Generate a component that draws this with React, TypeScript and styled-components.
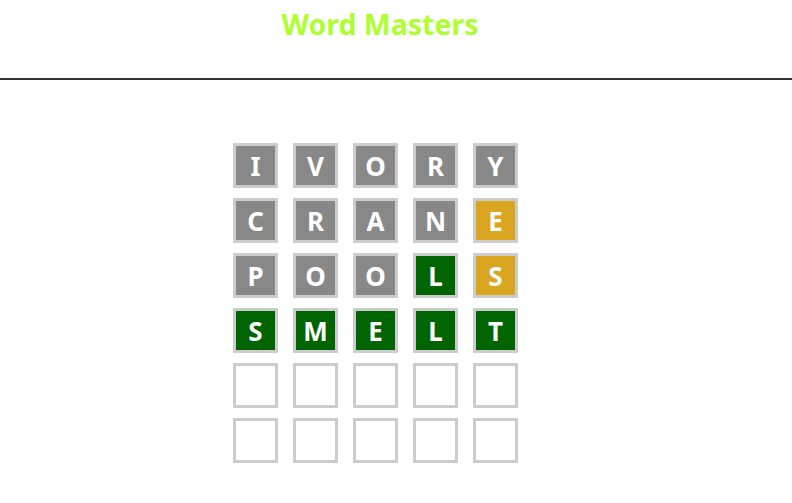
import styled, { createGlobalStyle } from 'styled-components';

type TileState = 'wrong' | 'close' | 'right' | 'empty';

type TileProps = {
	$state: TileState;
};

const GlobalStyle = createGlobalStyle`
	body {
		margin: 0;
		background: #fff;
		font-family: 'Noto Sans', 'Open Sans', sans-serif;
	}
`;

const Header = styled.header`
	height: 78px;
	border-bottom: 2px solid #333;
`;

const Title = styled.h1`
	width: 760px;
	margin: 0;
	padding-top: 6px;
	text-align: center;
	color: #adff2f;
	font-size: 28.5px;
	line-height: 36px;
	font-weight: 700;
`;

const Board = styled.main`
	display: grid;
	grid-template-columns: repeat(5, 45px);
	grid-auto-rows: 45px;
	column-gap: 15px;
	row-gap: 10px;
	margin: 63px 0 0 233px;
`;

const colours: Record<TileState, string> = {
	wrong: '#888888',
	close: '#daa520',
	right: '#006400',
	empty: '#ffffff'
};

const Tile = styled.div<TileProps>`
	box-sizing: border-box;
	display: flex;
	align-items: center;
	justify-content: center;
	border: 3px solid #ccc;
	background: ${(props) => colours[props.$state]};
	color: #fff;
	font-size: 26px;
	font-weight: 700;
`;

const guesses: { word: string; states: TileState[] }[] = [
	{ word: 'IVORY', states: ['wrong', 'wrong', 'wrong', 'wrong', 'wrong'] },
	{ word: 'CRANE', states: ['wrong', 'wrong', 'wrong', 'wrong', 'close'] },
	{ word: 'POOLS', states: ['wrong', 'wrong', 'wrong', 'right', 'close'] },
	{ word: 'SMELT', states: ['right', 'right', 'right', 'right', 'right'] },
	{ word: '     ', states: ['empty', 'empty', 'empty', 'empty', 'empty'] },
	{ word: '     ', states: ['empty', 'empty', 'empty', 'empty', 'empty'] }
];

const App = () => {
	return (
		<>
			<GlobalStyle />
			<Header>
				<Title>Word Masters</Title>
			</Header>
			<Board>
				{guesses.map((guess, row) =>
					guess.states.map((state, col) => (
						<Tile key={`${row}-${col}`} $state={state}>
							{guess.word[col].trim()}
						</Tile>
					))
				)}
			</Board>
		</>
	);
};

export default App;
